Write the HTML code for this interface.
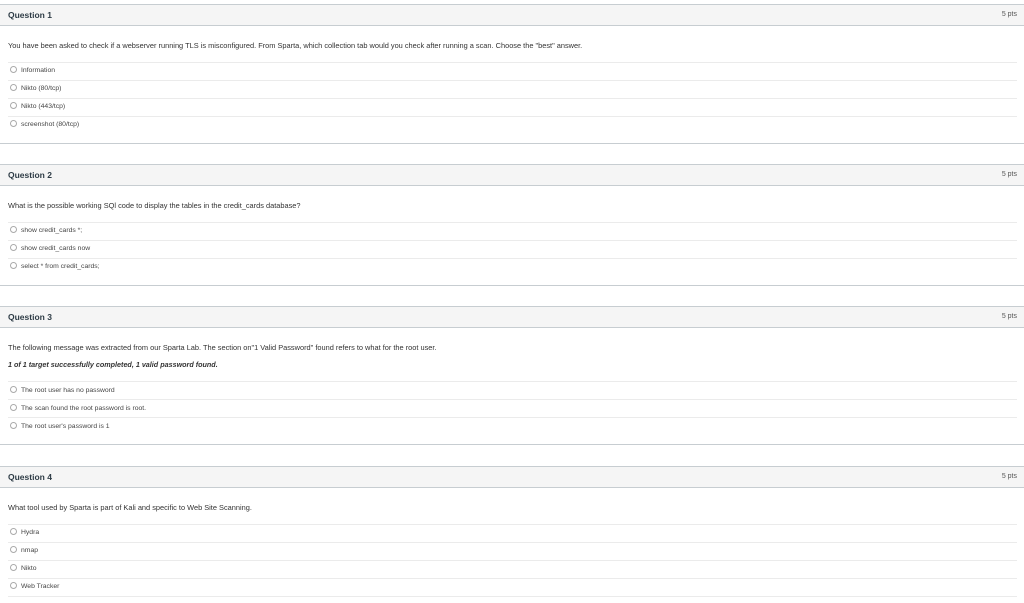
<!DOCTYPE html>
<html><head><meta charset="utf-8"><style>
body{margin:0;width:1024px;height:603px;background:#fff;font-family:"Liberation Sans",sans-serif;color:#2d3b45;position:relative;overflow:hidden}
.hd{position:absolute;left:0;width:1024px;height:20px;background:#f5f5f5;border-top:1px solid #c7cdd1;border-bottom:1px solid #c7cdd1}
.hd b{position:absolute;left:8px;top:5px;font-size:8.5px;font-weight:bold;color:#2d3b45}
.hd i{position:absolute;right:7px;top:6px;font-size:7px;font-style:normal;color:#555}
.bl{position:absolute;left:0;width:1024px;height:1px;background:#c7cdd1}
.sep{position:absolute;left:8px;width:1009px;height:1px;background:#ebebeb}
.q{position:absolute;left:8px;font-size:7.4px;color:#333;white-space:nowrap}
.o{position:absolute;left:10px;font-size:6.8px;color:#444;white-space:nowrap}
.o:before{content:"";display:inline-block;width:5px;height:5px;border:1px solid #aaa;border-radius:50%;margin-right:4px;vertical-align:-1px}
.it{font-style:italic;font-weight:bold;font-size:7.2px}
</style></head><body>

<div class="hd" style="top:4px"><b>Question 1</b><i>5 pts</i></div>
<div class="q" style="top:41px">You have been asked to check if a webserver running TLS is misconfigured. From Sparta, which collection tab would you check after running a scan. Choose the "best" answer.</div>
<div class="sep" style="top:62px"></div>
<div class="o" style="top:66px">Information</div>
<div class="sep" style="top:80px"></div>
<div class="o" style="top:84px">Nikto (80/tcp)</div>
<div class="sep" style="top:98px"></div>
<div class="o" style="top:102px">Nikto (443/tcp)</div>
<div class="sep" style="top:116px"></div>
<div class="o" style="top:120px">screenshot (80/tcp)</div>
<div class="bl" style="top:143px"></div>

<div class="hd" style="top:164px"><b>Question 2</b><i>5 pts</i></div>
<div class="q" style="top:201px">What is the possible working SQl code to display the tables in the credit_cards database?</div>
<div class="sep" style="top:222px"></div>
<div class="o" style="top:226px">show credit_cards *;</div>
<div class="sep" style="top:240px"></div>
<div class="o" style="top:244px">show credit_cards now</div>
<div class="sep" style="top:258px"></div>
<div class="o" style="top:262px">select * from credit_cards;</div>
<div class="bl" style="top:285px"></div>

<div class="hd" style="top:306px"><b>Question 3</b><i>5 pts</i></div>
<div class="q" style="top:343px">The following message was extracted from our Sparta Lab. The section on"1 Valid Password" found refers to what for the root user.</div>
<div class="q it" style="top:360px">1 of 1 target successfully completed, 1 valid password found.</div>
<div class="sep" style="top:381px"></div>
<div class="o" style="top:386px">The root user has no password</div>
<div class="sep" style="top:399px"></div>
<div class="o" style="top:404px">The scan found the root password is root.</div>
<div class="sep" style="top:417px"></div>
<div class="o" style="top:422px">The root user's password is 1</div>
<div class="bl" style="top:444px"></div>

<div class="hd" style="top:466px"><b>Question 4</b><i>5 pts</i></div>
<div class="q" style="top:503px">What tool used by Sparta is part of Kali and specific to Web Site Scanning.</div>
<div class="sep" style="top:524px"></div>
<div class="o" style="top:528px">Hydra</div>
<div class="sep" style="top:542px"></div>
<div class="o" style="top:546px">nmap</div>
<div class="sep" style="top:560px"></div>
<div class="o" style="top:564px">Nikto</div>
<div class="sep" style="top:578px"></div>
<div class="o" style="top:582px">Web Tracker</div>
<div class="sep" style="top:596px"></div>
</body></html>
